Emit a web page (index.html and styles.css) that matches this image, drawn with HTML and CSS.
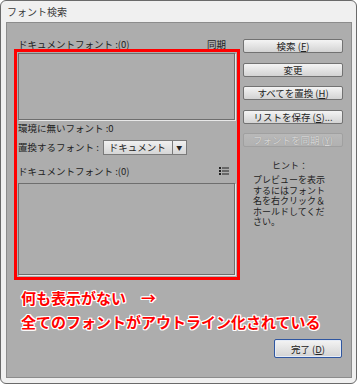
FILE: index.html
```html
<!DOCTYPE html>
<html lang="ja">

<head>
    <meta charset="UTF-8" />
    <meta name="viewport" content="width=device-width, initial-scale=1.0" />
    <title>フォント検索</title>
    <link rel="stylesheet" href="styles.css">
</head>

<body>
    <div class="window">
        <div class="titlebar">フォント検索</div>
        <div class="panel">
            <div class="main">
                <div class="left">
                    <div class="row head">
                        <span>ドキュメントフォント :(0)</span>
                        <span>同期</span>
                    </div>
                    <div class="listbox list-top"></div>
                    <div class="row missing">環境に無いフォント :0</div>
                    <div class="row replace">
                        <span>置換するフォント :</span>
                        <div class="select">
                            <span class="select-text">ドキュメント</span>
                            <span class="select-arrow">▼</span>
                        </div>
                    </div>
                    <div class="row head doc">
                        <span>ドキュメントフォント :(0)</span>
                        <svg class="list-icon" width="10" height="8" viewBox="0 0 10 8">
                            <rect x="0" y="0" width="2" height="2" fill="#222" />
                            <rect x="3" y="0.5" width="7" height="1" fill="#222" />
                            <rect x="0" y="3" width="2" height="2" fill="#222" />
                            <rect x="3" y="3.5" width="7" height="1" fill="#222" />
                            <rect x="0" y="6" width="2" height="2" fill="#222" />
                            <rect x="3" y="6.5" width="7" height="1" fill="#222" />
                        </svg>
                    </div>
                    <div class="listbox list-bottom"></div>
                </div>

                <div class="right">
                    <button class="btn">検索 (<u>F</u>)</button>
                    <button class="btn">変更</button>
                    <button class="btn">すべてを置換 (<u>H</u>)</button>
                    <button class="btn">リストを保存 (<u>S</u>)...</button>
                    <button class="btn disabled">フォントを同期 (<u>Y</u>)</button>
                    <div class="hint">
                        <div class="hint-title">ヒント：</div>
                        プレビューを表示するにはフォント名を右クリック＆ホールドしてください。
                    </div>
                </div>
            </div>

            <div class="note">
                <div>何も表示がない　→</div>
                <div>全てのフォントがアウトライン化されている</div>
            </div>

            <div class="footer">
                <button class="btn done">完了 (<u>D</u>)</button>
            </div>

            <!-- red annotation frame over the font lists -->
            <div class="mark"></div>
        </div>
    </div>
</body>

</html>
```

FILE: styles.css
```css
body {
    margin: 0;
    background-color: #ffffff;
    font-family: "Noto Sans CJK JP", "Noto Sans", sans-serif;
    color: #222;
}

.window {
    width: 357px;
    height: 384px;
    box-sizing: border-box;
    border: 1px solid #6a6a6a;
    border-radius: 6px;
    background-color: #f0f0f0;
    padding: 0 4px 5px 5px;
    display: flex;
    flex-direction: column;
}

.titlebar {
    height: 21px;
    line-height: 22px;
    padding-left: 1px;
    font-size: 10px;
    color: #3a3a3a;
}

.panel {
    position: relative;
    flex: 1;
    background-color: #adadad;
    border: 1px solid #8c8c8c;
    padding: 14px 8px 0 11px;
}

.main {
    display: flex;
    gap: 8px;
}

.left {
    width: 217px;
    display: flex;
    flex-direction: column;
}

.row {
    height: 14px;
    line-height: 14px;
    font-size: 9.5px;
    display: flex;
    align-items: center;
}

.head {
    justify-content: space-between;
    padding-right: 9px;
}

.listbox {
    box-sizing: border-box;
    border: 1px solid #6e6e6e;
    box-shadow: 1px 1px 0 #e8e8e8;
    background-color: #adadad;
}

.list-top {
    margin-top: 2px;
    height: 67px;
}

.missing {
    margin-top: 1px;
}

.replace {
    margin-top: 5px;
    gap: 4px;
}

.select {
    display: flex;
    height: 13px;
    width: 82px;
    border: 1px solid #7a7a7a;
    background: linear-gradient(#f0f0f0, #d6d6d6);
    font-size: 9.5px;
    line-height: 13px;
}

.select-text {
    flex: 1;
    padding-left: 5px;
}

.select-arrow {
    width: 13px;
    border-left: 1px solid #7a7a7a;
    text-align: center;
    font-size: 6px;
}

.doc {
    margin-top: 10px;
    padding-right: 6px;
}

.list-bottom {
    margin-top: 5px;
    height: 92px;
}

.right {
    width: 100px;
    display: flex;
    flex-direction: column;
    gap: 9.5px;
    padding-top: 2px;
}

.btn {
    height: 14px;
    padding: 0;
    border: 1px solid #727272;
    border-radius: 2px;
    background: linear-gradient(#f4f4f4, #d3d3d3);
    font-family: "Noto Sans CJK JP", "Noto Sans", sans-serif;
    font-size: 9.5px;
    line-height: 12px;
    color: #222;
}

.disabled {
    border-color: #a0a0a0;
    background: linear-gradient(#b9b9b9, #b1b1b1);
    color: #d6d6d6;
    text-shadow: 0 0 1px #8a8a8a;
}

.hint {
    margin-top: 4px;
    padding-left: 10px;
    width: 74px;
    font-size: 9px;
    line-height: 10.5px;
    word-break: break-all;
}

.hint-title {
    text-align: center;
    margin-bottom: 4px;
}

.note {
    margin-top: 11px;
    padding-left: 3px;
    font-size: 15px;
    font-weight: bold;
    line-height: 24px;
    color: #ff0000;
    text-shadow: 1px 0 0 #fff, -1px 0 0 #fff, 0 1px 0 #fff, 0 -1px 0 #fff,
        1px 1px 0 #fff, -1px -1px 0 #fff, 1px -1px 0 #fff, -1px 1px 0 #fff;
}

.footer {
    display: flex;
    justify-content: flex-end;
    margin-top: 5px;
    padding-right: 1px;
}

.done {
    width: 68px;
    height: 19px;
    border: 1px solid #2f56a0;
    box-shadow: inset 0 0 0 1px #e6ecf6;
}

.mark {
    position: absolute;
    left: 7px;
    top: 26px;
    width: 220px;
    height: 225px;
    border: 3px solid #ff0000;
}
```
